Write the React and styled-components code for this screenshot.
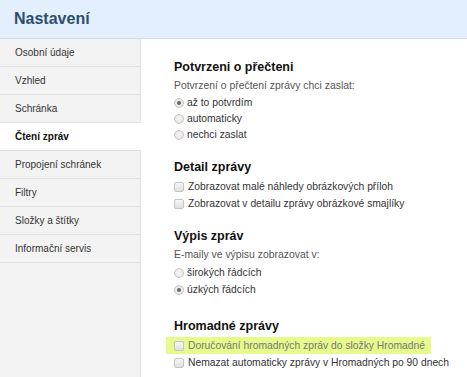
import React from 'react';
import styled, { createGlobalStyle } from 'styled-components';

const GlobalStyle = createGlobalStyle`
  html, body {
    margin: 0;
    padding: 0;
    background: #fff;
    font-family: "Liberation Sans", Arial, sans-serif;
  }
`;

const menu = [
  'Osobní údaje',
  'Vzhled',
  'Schránka',
  'Čtení zpráv',
  'Propojení schránek',
  'Filtry',
  'Složky a štítky',
  'Informační servis',
];

const App = () => (
  <Page>
    <GlobalStyle />
    <Header>
      <Title>Nastavení</Title>
    </Header>
    <Body>
      <Sidebar>
        {menu.map((item) => (
          <MenuItem key={item} $active={item === 'Čtení zpráv'}>
            {item}
          </MenuItem>
        ))}
      </Sidebar>

      <Content>
        <Section>
          <SectionTitle>Potvrzeni o přečteni</SectionTitle>
          <Hint>Potvrzení o přečtení zprávy chci zaslat:</Hint>
          <Option $compact>
            <Radio $checked />až to potvrdím
          </Option>
          <Option $compact>
            <Radio />automaticky
          </Option>
          <Option $compact>
            <Radio />nechci zaslat
          </Option>
        </Section>

        <Section>
          <SectionTitle>Detail zprávy</SectionTitle>
          <Option>
            <Check />Zobrazovat malé náhledy obrázkových příloh
          </Option>
          <Option>
            <Check />Zobrazovat v detailu zprávy obrázkové smajlíky
          </Option>
        </Section>

        <Section>
          <SectionTitle>Výpis zpráv</SectionTitle>
          <Hint>E-maily ve výpisu zobrazovat v:</Hint>
          <Option>
            <Radio />širokých řádcích
          </Option>
          <Option>
            <Radio $checked />úzkých řádcích
          </Option>
        </Section>

        <Section $spaced>
          <SectionTitle>Hromadné zprávy</SectionTitle>
          <Option $highlight>
            <Check />Doručování hromadných zpráv do složky Hromadné
          </Option>
          <Option>
            <Check />Nemazat automaticky zprávy v Hromadných po 90 dnech
          </Option>
        </Section>
      </Content>
    </Body>
  </Page>
);

const Page = styled.div`
  width: 467px;
  height: 377px;
  overflow: hidden;
  display: flex;
  flex-direction: column;
`;

const Header = styled.div`
  height: 39px;
  flex: none;
  background: #e3effc;
  border-bottom: 1px solid #cfdbe8;
  display: flex;
  align-items: center;
  padding-left: 14px;
  box-sizing: border-box;
`;

const Title = styled.h1`
  margin: 0;
  font-size: 16px;
  font-weight: bold;
  color: #2e4e6e;
`;

const Body = styled.div`
  flex: 1;
  display: flex;
  min-width: 0;
`;

const Sidebar = styled.div`
  width: 140px;
  flex: none;
  background: #f3f3f3;
  border-right: 1px solid #e4e4e4;
  display: flex;
  flex-direction: column;
`;

const MenuItem = styled.div`
  height: 28px;
  box-sizing: border-box;
  display: flex;
  align-items: center;
  padding-left: 15px;
  font-size: 10px;
  color: ${(p) => (p.$active ? '#111' : '#333')};
  font-weight: ${(p) => (p.$active ? 'bold' : 'normal')};
  background: ${(p) => (p.$active ? '#fff' : 'transparent')};
  margin-right: ${(p) => (p.$active ? '-1px' : '0')};
  border-bottom: 1px solid #e1e1e1;
`;

const Content = styled.div`
  flex: 1;
  min-width: 0;
  padding: 20px 0 0 33px;
  display: flex;
  flex-direction: column;
  gap: 16px;
`;

const Section = styled.div`
  display: flex;
  flex-direction: column;
  margin-top: ${(p) => (p.$spaced ? '4px' : '0')};
`;

const SectionTitle = styled.h2`
  margin: 0 0 3px;
  font-size: 12.5px;
  font-weight: bold;
  color: #111;
  line-height: 16px;
`;

const Hint = styled.div`
  font-size: 10.4px;
  color: #555;
  line-height: 16px;
  white-space: nowrap;
  margin-bottom: 1px;
`;

const Option = styled.div`
  display: flex;
  align-items: center;
  gap: 4px;
  font-size: 10.3px;
  white-space: nowrap;
  color: ${(p) => (p.$highlight ? '#777' : '#333')};
  line-height: 16px;
  height: ${(p) => (p.$compact ? '16px' : '17px')};
  background: ${(p) => (p.$highlight ? '#e7fa8c' : 'transparent')};
  margin: ${(p) => (p.$highlight ? '0 0 0 -8px' : '0')};
  padding: ${(p) => (p.$highlight ? '0 6px 0 8px' : '0')};
  align-self: flex-start;
`;

const Radio = styled.span`
  width: 8px;
  height: 8px;
  border-radius: 50%;
  border: 1px solid #c4c4c4;
  background: radial-gradient(circle, #f5f5f5, #e2e2e2);
  flex: none;
  position: relative;
  margin-right: -1px;
  &::after {
    content: '';
    display: ${(p) => (p.$checked ? 'block' : 'none')};
    position: absolute;
    left: 2px;
    top: 2px;
    width: 4px;
    height: 4px;
    border-radius: 50%;
    background: #666;
  }
`;

const Check = styled.span`
  width: 8px;
  height: 8px;
  border-radius: 2px;
  border: 1px solid #c4c4c4;
  background: linear-gradient(#f6f6f6, #e0e0e0);
  flex: none;
`;

export default App;
